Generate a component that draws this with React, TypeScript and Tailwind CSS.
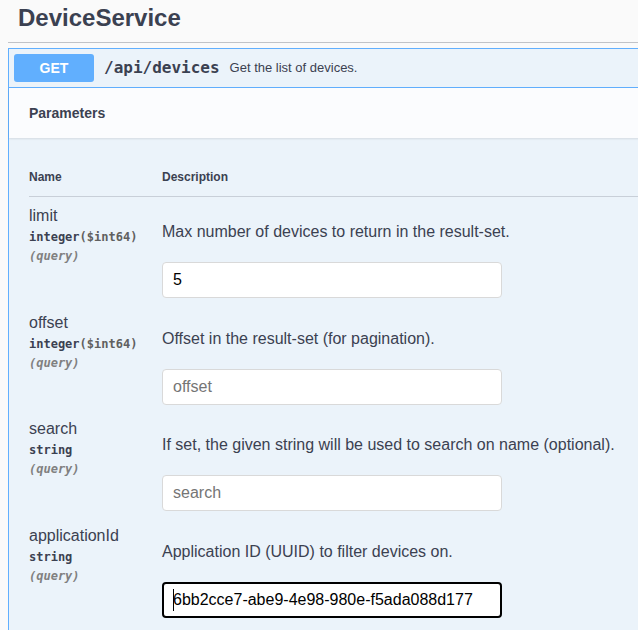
import React from "react";

const sans = "font-['Liberation_Sans',Arial,sans-serif]";
const mono = "font-['DejaVu_Sans_Mono',monospace]";

type Param = {
  name: string;
  type: string;
  format?: string;
  desc: string;
  value?: string;
  placeholder?: string;
  focused?: boolean;
};

const params: Param[] = [
  {
    name: "limit",
    type: "integer",
    format: "($int64)",
    desc: "Max number of devices to return in the result-set.",
    value: "5",
  },
  {
    name: "offset",
    type: "integer",
    format: "($int64)",
    desc: "Offset in the result-set (for pagination).",
    placeholder: "offset",
  },
  {
    name: "search",
    type: "string",
    desc: "If set, the given string will be used to search on name (optional).",
    placeholder: "search",
  },
  {
    name: "applicationId",
    type: "string",
    desc: "Application ID (UUID) to filter devices on.",
    value: "6bb2cce7-abe9-4e98-980e-f5ada088d177",
    focused: true,
  },
];

function ParamRow({ p }: { p: Param }) {
  return (
    <div className="flex h-[106.67px]">
      <div className="w-[133px] shrink-0 pt-[10px]">
        <div className="text-[16px] leading-[18px] text-[#3b4151]">{p.name}</div>
        <div className={`${mono} pt-[5px] pb-[5px] text-[12px] leading-[14px] font-bold text-[#3b4151]`}>
          {p.type}
          {p.format && <span className="text-[#606060]">{p.format}</span>}
        </div>
        <div className={`${mono} text-[12px] leading-[14px] font-bold italic text-[#808080]`}>(query)</div>
      </div>
      <div className="flex flex-col">
        <p className="mt-[26px] text-[16px] leading-[18px] text-[#3b4151] whitespace-nowrap">{p.desc}</p>
        <div className="relative mt-[21px] w-[340px] h-[36px]">
          {p.focused ? (
            <>
              <input
                readOnly
                defaultValue={p.value}
                className={`${sans} w-full h-full rounded-[4px] border-2 border-black bg-white pl-[9px] pr-[9px] text-[16px] text-black outline-none`}
              />
              <span className="absolute left-[11px] top-[7px] h-[22px] w-[1px] bg-black" />
            </>
          ) : (
            <input
              readOnly
              defaultValue={p.value}
              placeholder={p.placeholder}
              className={`${sans} w-full h-full rounded-[4px] border border-[#d9d9d9] bg-white px-[10px] text-[16px] text-black outline-none placeholder:text-[#757575]`}
            />
          )}
        </div>
      </div>
    </div>
  );
}

export default function App() {
  return (
    <div className={`${sans} w-[638px] h-[630px] overflow-hidden bg-[#fafafa]`}>
      <div className="pl-[8px] w-[720px]">
        <h4 className="h-[43px] border-b border-[#c1c3c7] pl-[10px] pt-[4px] text-[24px] leading-[28px] font-bold text-[#3b4151]">
          DeviceService
        </h4>
        <div className="mt-[5px] border border-[#61affe] bg-[#ebf3fa]">
          <div className="flex items-center border-b border-[#61affe] p-[5px]">
            <div className="flex h-[28px] w-[80px] items-center justify-center rounded-[3px] bg-[#61affe] text-[14px] font-bold text-white">
              GET
            </div>
            <span className={`${mono} px-[10px] text-[16px] font-bold text-[#3b4151]`}>/api/devices</span>
            <span className="text-[13px] text-[#3b4151]">Get the list of devices.</span>
          </div>
          <div className="flex h-[50px] items-center bg-[#fbfcfe] px-[20px] shadow-[0_1px_2px_rgba(0,0,0,0.1)]">
            <span className="text-[14px] font-bold text-[#3b4151]">Parameters</span>
          </div>
          <div className="px-[20px] pt-[20px] pb-[40px]">
            <div className="flex border-b border-[#c8cfd8] py-[12px] text-[12px] leading-[14px] font-bold text-[#3b4151]">
              <div className="w-[133px]">Name</div>
              <div>Description</div>
            </div>
            {params.map((p) => (
              <ParamRow key={p.name} p={p} />
            ))}
          </div>
        </div>
      </div>
    </div>
  );
}
